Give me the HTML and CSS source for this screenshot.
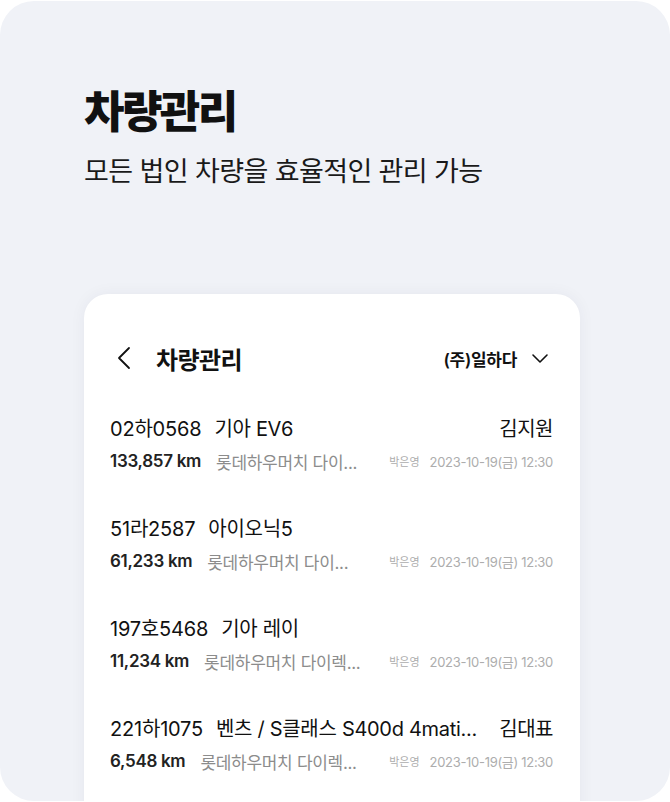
FILE: index.html
```html
<!DOCTYPE html>
<html lang="ko">
<head>
  <meta charset="UTF-8" />
  <meta name="viewport" content="width=device-width, initial-scale=1" />
  <title>차량관리</title>
  <link rel="stylesheet" href="styles.css">
</head>
<body>
  <div class="frame">
    <div class="hero">
      <h1>차량관리</h1>
      <p>모든 법인 차량을 효율적인 관리 가능</p>
    </div>

    <div class="phone">
      <div class="phone-header">
        <svg class="back" width="14" height="24" viewBox="0 0 14 24">
          <polyline points="12,2 2,12 12,22" fill="none" stroke="#111" stroke-width="1.8" stroke-linecap="round" stroke-linejoin="round" />
        </svg>
        <span class="phone-title">차량관리</span>
        <span class="company">(주)일하다</span>
        <svg class="drop" width="18" height="11" viewBox="0 0 18 11">
          <polyline points="2,2 9,9 16,2" fill="none" stroke="#111" stroke-width="1.6" stroke-linecap="round" stroke-linejoin="round" />
        </svg>
      </div>

      <ul class="car-list">
        <li class="car">
          <div class="car-top">
            <span class="plate">02하0568</span>
            <span class="model">기아 EV6</span>
            <span class="driver">김지원</span>
          </div>
          <div class="car-meta">
            <span class="km">133,857 km</span>
            <span class="place">롯데하우머치 다이...</span>
            <span class="writer">박은영</span>
            <span class="date">2023-10-19(금) 12:30</span>
          </div>
        </li>
        <li class="car">
          <div class="car-top">
            <span class="plate">51라2587</span>
            <span class="model">아이오닉5</span>
          </div>
          <div class="car-meta">
            <span class="km">61,233 km</span>
            <span class="place">롯데하우머치 다이...</span>
            <span class="writer">박은영</span>
            <span class="date">2023-10-19(금) 12:30</span>
          </div>
        </li>
        <li class="car">
          <div class="car-top">
            <span class="plate">197호5468</span>
            <span class="model">기아 레이</span>
          </div>
          <div class="car-meta">
            <span class="km">11,234 km</span>
            <span class="place">롯데하우머치 다이렉...</span>
            <span class="writer">박은영</span>
            <span class="date">2023-10-19(금) 12:30</span>
          </div>
        </li>
        <li class="car">
          <div class="car-top">
            <span class="plate">221하1075</span>
            <span class="model">벤츠 / S클래스 S400d 4mati...</span>
            <span class="driver">김대표</span>
          </div>
          <div class="car-meta">
            <span class="km">6,548 km</span>
            <span class="place">롯데하우머치 다이렉...</span>
            <span class="writer">박은영</span>
            <span class="date">2023-10-19(금) 12:30</span>
          </div>
        </li>
      </ul>
    </div>
  </div>
</body>
</html>
```

FILE: styles.css
```css
body {
  margin: 0;
  padding: 0;
  background-color: #fff;
  font-family: 'Inter', 'Noto Sans CJK KR', sans-serif;
  color: #111;
}
.frame {
  width: 670px;
  height: 800px;
  margin-top: 1px;
  background-color: #f0f2f7;
  border-radius: 34px;
  overflow: hidden;
  box-sizing: border-box;
  padding: 0 90px 0 84px;
}
.hero {
  padding-top: 84px;
}
.hero h1 {
  margin: 0;
  font-size: 44px;
  line-height: 54px;
  font-weight: 900;
  letter-spacing: -2.6px;
}
.hero p {
  margin: 16px 0 0;
  font-size: 27px;
  line-height: 34px;
  letter-spacing: -0.6px;
  color: #1a1a1a;
}
.phone {
  margin-top: 105px;
  height: 520px;
  background-color: #fff;
  border-radius: 24px 24px 0 0;
  box-shadow: 0 0 16px rgba(30, 40, 80, 0.05);
  padding: 40px 27px 0 26px;
}
.phone-header {
  display: flex;
  align-items: center;
  height: 48px;
}
.back {
  margin-left: 7px;
}
.phone-title {
  margin-left: 25px;
  font-size: 24px;
  font-weight: 700;
  letter-spacing: -0.6px;
}
.company {
  margin-left: auto;
  font-size: 17px;
  font-weight: 600;
  letter-spacing: -0.3px;
}
.drop {
  margin-left: 14px;
  margin-right: 4px;
}
.car-list {
  list-style: none;
  margin: 0;
  padding: 10px 0 0;
}
.car {
  padding: 22px 0 20px;
}
.car-top {
  display: flex;
  align-items: center;
  height: 26px;
  font-size: 20px;
  white-space: nowrap;
}
.plate {
  flex: none;
  letter-spacing: -0.2px;
}
.model {
  margin-left: 13px;
  min-width: 0;
  overflow: hidden;
  text-overflow: ellipsis;
  letter-spacing: -0.3px;
}
.driver {
  flex: none;
  margin-left: auto;
  padding-left: 20px;
  letter-spacing: -0.5px;
}
.car-meta {
  display: flex;
  align-items: center;
  height: 22px;
  margin-top: 10px;
  white-space: nowrap;
}
.km {
  flex: none;
  font-size: 17px;
  font-weight: 600;
  letter-spacing: -0.3px;
  color: #222;
}
.place {
  flex: 1;
  min-width: 0;
  margin-left: 15px;
  margin-right: 20px;
  overflow: hidden;
  text-overflow: ellipsis;
  font-size: 17px;
  letter-spacing: -0.3px;
  color: #8c8c8c;
}
.writer {
  flex: none;
  font-size: 11px;
  color: #adadad;
}
.date {
  flex: none;
  margin-left: 10px;
  font-size: 13px;
  color: #adadad;
  letter-spacing: -0.3px;
}
```
